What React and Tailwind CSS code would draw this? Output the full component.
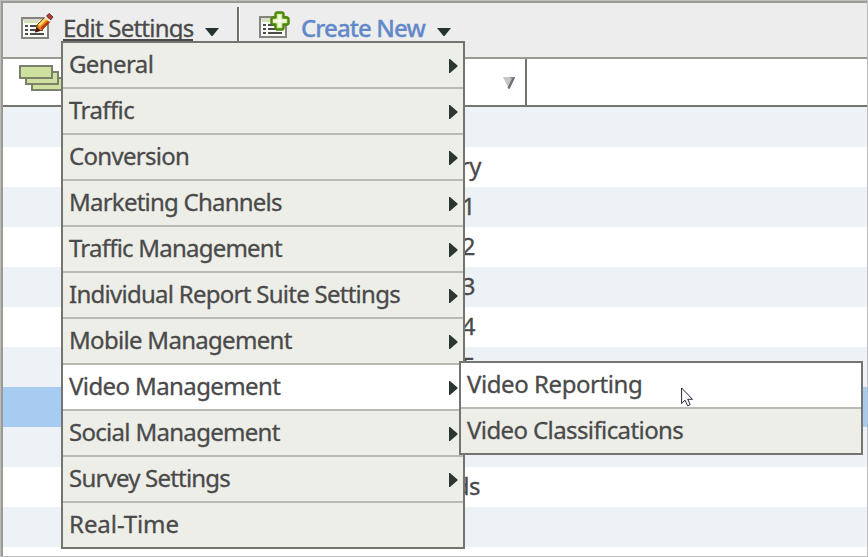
import React from "react";

const menuItems = [
  { label: "General", track: "tracking-[-0.6px]" },
  { label: "Traffic", track: "tracking-[-0.6px]" },
  { label: "Conversion", track: "tracking-[-0.7px]" },
  { label: "Marketing Channels", track: "tracking-[-0.77px]" },
  { label: "Traffic Management", track: "tracking-[-0.78px]" },
  { label: "Individual Report Suite Settings", track: "tracking-[-0.73px]" },
  { label: "Mobile Management", track: "tracking-[-0.7px]" },
  { label: "Video Management", track: "tracking-[-0.6px]", active: true },
  { label: "Social Management", track: "tracking-[-0.7px]" },
  { label: "Survey Settings", track: "tracking-[-0.8px]" },
  { label: "Real-Time", track: "tracking-[-0.05px]", leaf: true },
];

const subItems = [
  { label: "Video Reporting", track: "tracking-[-0.43px]", active: true, leaf: true },
  { label: "Video Classifications", track: "tracking-[-0.6px]", leaf: true },
];

const rows = [
  { bg: "bg-[#ecf2f6]", text: "" },
  { bg: "bg-white", text: "ry", width: "w-[478px]" },
  { bg: "bg-[#ecf2f6]", text: "1", width: "w-[472px]" },
  { bg: "bg-white", text: "2", width: "w-[472px]" },
  { bg: "bg-[#ecf2f6]", text: "3", width: "w-[472px]" },
  { bg: "bg-white", text: "4", width: "w-[472px]" },
  { bg: "bg-[#ecf2f6]", text: "5", width: "w-[472px]" },
  { bg: "bg-[#a8cbf1]", text: "" },
  { bg: "bg-[#ecf2f6]", text: "" },
  { bg: "bg-white", text: "ds", width: "w-[477px]" },
  { bg: "bg-[#ecf2f6]", text: "" },
  { bg: "bg-white", text: "" },
];

function ListLines() {
  return (
    <>
      <rect x="1" y="1" width="26" height="20" fill="#f8f8f6" stroke="#85857d" strokeWidth="2" />
      <rect x="2" y="2" width="24" height="2" fill="#dcdcd6" />
      <rect x="3" y="4" width="15" height="2" fill="#cfe4ac" />
      <path d="M4 9h3M4 13h3M4 17h3M9 9h8M9 13h13M9 17h14" stroke="#4c4c48" strokeWidth="2" />
    </>
  );
}

function EditIcon() {
  return (
    <svg className="h-7 w-8 overflow-visible" viewBox="0 0 32 28">
      <g transform="translate(0 4)">
        <ListLines />
      </g>
      <path d="M14.500 19l2-7.500L24 4l5 4.500L21 17z" fill="#e8860f" stroke="#8a4a1c" strokeWidth="1" />
      <path d="M18 12.500L25 5.500" stroke="#ffdc78" strokeWidth="2.400" />
      <path d="M20.500 15.500L28.500 8" stroke="#b8330c" strokeWidth="2" />
      <path d="M25.500 3L28 .500l4 3.500L29.500 7z" fill="#b83a34" stroke="#5c3030" strokeWidth="1" />
      <path d="M24 3.800l5 4.400" stroke="#f2eee9" strokeWidth="1.800" />
      <path d="M14 19.500l1.600-5.500 4 3.500z" fill="#4a1408" />
    </svg>
  );
}

function CreateIcon() {
  return (
    <svg className="h-7 w-8 overflow-visible" viewBox="0 0 32 28">
      <g transform="translate(0 5)">
        <ListLines />
      </g>
      <path
        d="M17.500 1.500h6l1 1v4h4l1 1v5l-1 1h-4v4l-1 1h-6l-1-1v-4h-3l-1-1v-5l1-1h3v-4z"
        fill="#cfe89a"
        stroke="#4b8509"
        strokeWidth="2.400"
        strokeLinejoin="round"
      />
      <path d="M20.500 4v12M14.500 10h12.500" stroke="#f4fae2" strokeWidth="3" />
    </svg>
  );
}

function StackIcon() {
  return (
    <svg className="h-[27px] w-[46px]" viewBox="0 0 46 27" fill="#cee19f" stroke="#7c816c" strokeWidth="2">
      <rect x="13" y="13" width="32" height="12" />
      <rect x="7" y="7" width="32" height="12" />
      <rect x="1" y="1" width="32" height="12" />
    </svg>
  );
}

function DownArrow() {
  return (
    <svg className="h-2 w-[14px]" viewBox="0 0 14 8">
      <path d="M0 0h14L7.500 8h-1z" fill="#26332f" />
    </svg>
  );
}

function MenuItem({ item, last }) {
  return (
    <div
      className={`flex h-[46px] items-start justify-between pl-1.5 pr-1 ${
        last ? "" : "border-b-2 border-[#b9bab2]"
      } ${item.active ? "bg-white" : "bg-[#edeee8]"}`}
    >
      <span className={`whitespace-nowrap leading-[42px] ${item.track}`}>{item.label}</span>
      {!item.leaf && (
        <svg className="mt-4 h-[14px] w-[10px]" viewBox="0 0 10 14">
          <path d="M0 0h1l7.500 6.500v1L1 14H0z" fill="#2b3633" />
        </svg>
      )}
    </div>
  );
}

export default function App() {
  return (
    <div className="relative h-[557px] w-[868px] overflow-hidden border border-[#bdbdbd] bg-white font-['Noto_Sans','Open_Sans',sans-serif] text-[24px] text-[#4a4a4a] [-webkit-text-stroke:0.3px]">
      <div className="flex h-full flex-col border-l-2 border-t-2 border-[#9a9b93]">
        <div className="flex h-14 shrink-0 items-start border-b-2 border-[#999a92] bg-[#ededed]">
          <div className="ml-[18px] mt-2.5">
            <EditIcon />
          </div>
          <span className="ml-[10px] h-[38px] w-[130px] whitespace-nowrap border-b-2 border-[#4a4a4a] leading-[50px] tracking-[-0.78px]">
            Edit Settings
          </span>
          <div className="ml-3 mt-[25px]">
            <DownArrow />
          </div>
          <div className="ml-[18px] mt-1 h-9 w-[3px] border-l-2 border-r border-l-[#6f706a] border-r-white" />
          <div className="ml-[19px] mt-2">
            <CreateIcon />
          </div>
          <span className="ml-[10px] w-[125px] whitespace-nowrap font-medium leading-[50px] tracking-[-0.9px] text-[#6388ca]">
            Create New
          </span>
          <div className="ml-[11px] mt-[25px]">
            <DownArrow />
          </div>
        </div>

        <div className="flex h-12 shrink-0 border-b-2 border-[#74756e] bg-white">
          <div className="flex w-[524px] items-start justify-between border-r-2 border-[#74756e] pl-4 pr-[10px]">
            <div className="mt-1.5">
              <StackIcon />
            </div>
            <svg className="mt-[18px] h-3 w-3" viewBox="0 0 12 12">
              <path d="M0 0h12L6 12z" fill="#c6c6c6" />
              <path d="M11 0L5.500 11.500" fill="none" stroke="#70706e" strokeWidth="2.400" />
              <path d="M7 .7h5" stroke="#8c8c8a" strokeWidth="1.200" />
            </svg>
          </div>
        </div>

        <div className="flex flex-col">
          {rows.map((row, i) => (
            <div key={i} className={`h-10 shrink-0 ${row.bg}`}>
              {row.text && <div className={`text-right leading-[38px] tracking-[-0.5px] ${row.width}`}>{row.text}</div>}
            </div>
          ))}
        </div>
      </div>

      <div className="absolute left-[60px] top-10 w-[404px] border-2 border-[#747570] bg-[#edeee8]">
        <div className="h-[504px] overflow-hidden">
          {menuItems.map((item, i) => (
            <MenuItem key={item.label} item={item} last={i === menuItems.length - 1} />
          ))}
        </div>
      </div>

      <div className="absolute left-[458px] top-[360px] w-[404px] border-2 border-[#747570] bg-[#edeee8]">
        <div className="h-[90px] overflow-hidden">
          {subItems.map((item, i) => (
            <MenuItem key={item.label} item={item} last={i === subItems.length - 1} />
          ))}
        </div>
      </div>

      <svg className="absolute left-[680px] top-[386px] h-[20px] w-[13px]" viewBox="0 0 13 20">
        <path
          d="M.6 1v15.500l3.400-3.300 2.600 5.600 2.600-1.200-2.500-5.300h4.800z"
          fill="#fff"
          stroke="#24243c"
          strokeWidth="1"
        />
      </svg>
    </div>
  );
}
